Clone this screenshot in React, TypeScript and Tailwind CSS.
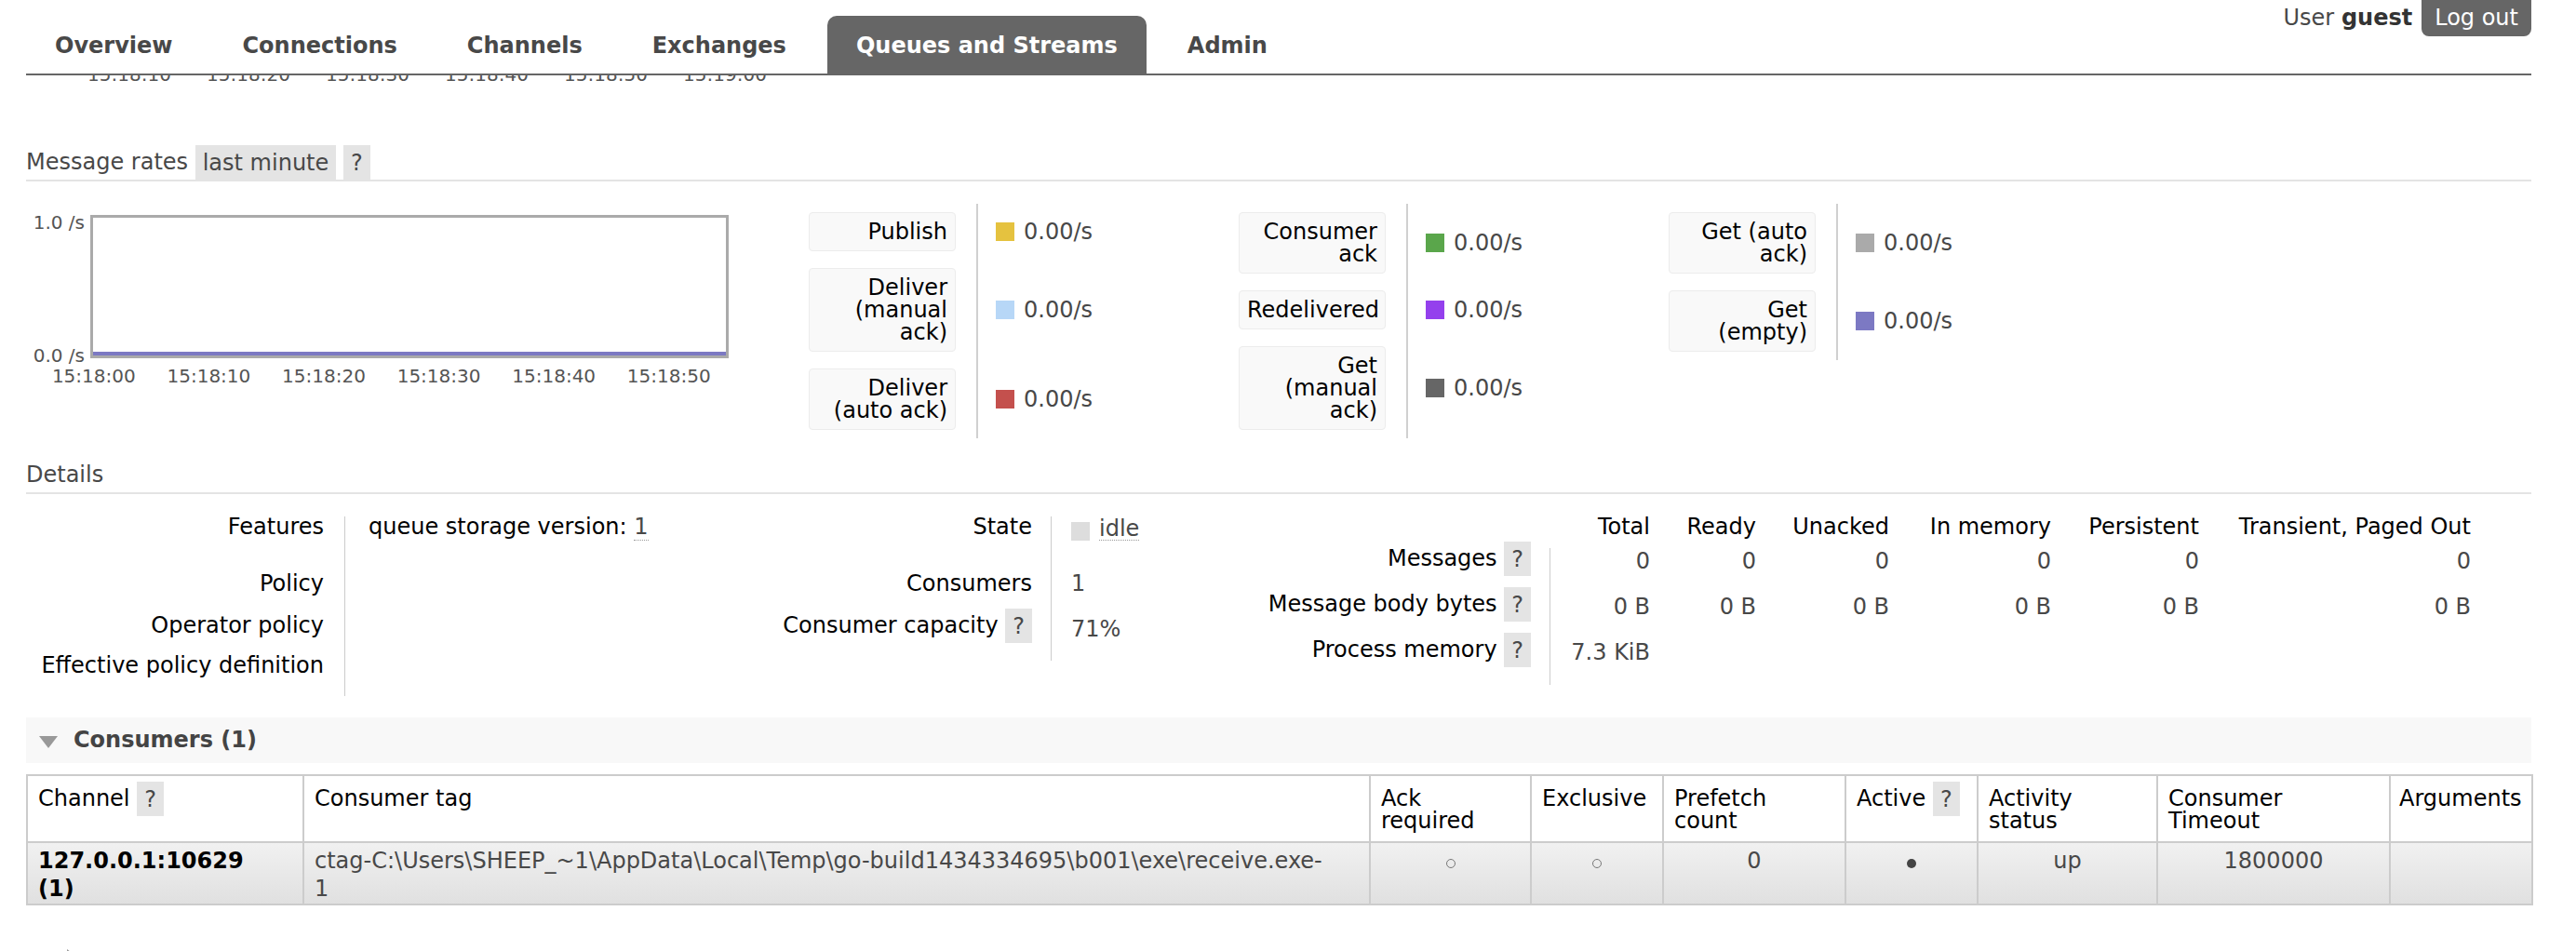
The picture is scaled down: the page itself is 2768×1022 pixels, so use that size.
import React from "react";

const tabs = ["Overview", "Connections", "Channels", "Exchanges", "Queues and Streams", "Admin"];

const peekLabels = ["15:18:10", "15:18:20", "15:18:30", "15:18:40", "15:18:50", "15:19:00"];
const timeLabels = ["15:18:00", "15:18:10", "15:18:20", "15:18:30", "15:18:40", "15:18:50"];

const legend = [
  [
    { label: "Publish", color: "#e5c23f" },
    { label: "Deliver (manual ack)", color: "#b7d7f7" },
    { label: "Deliver (auto ack)", color: "#c4504d" },
  ],
  [
    { label: "Consumer ack", color: "#5aa64b" },
    { label: "Redelivered", color: "#9440ed" },
    { label: "Get (manual ack)", color: "#666666" },
  ],
  [
    { label: "Get (auto ack)", color: "#aaaaaa" },
    { label: "Get (empty)", color: "#7c79c3" },
  ],
];

const statCols = [
  { name: "Total", w: "w-[108px]", msgs: "0", bytes: "0 B" },
  { name: "Ready", w: "w-[114px]", msgs: "0", bytes: "0 B" },
  { name: "Unacked", w: "w-[143px]", msgs: "0", bytes: "0 B" },
  { name: "In memory", w: "w-[174px]", msgs: "0", bytes: "0 B" },
  { name: "Persistent", w: "w-[159px]", msgs: "0", bytes: "0 B" },
  { name: "Transient, Paged Out", w: "w-[292px]", msgs: "0", bytes: "0 B" },
];

function Help() {
  return <span className="bg-[#e4e4e4] px-[8px] py-[4.5px] text-[#484848]">?</span>;
}

function Header() {
  return (
    <div className="flex items-start justify-between border-b-2 border-[#666]">
      <ul className="flex gap-[13px] pt-[17px]">
        {tabs.map((t) => (
          <li
            key={t}
            className={`h-[62px] px-[31px] pt-[18px] font-bold leading-[29px] ${
              t === "Queues and Streams" ? "rounded-t-[10px] bg-[#666] text-white" : "text-[#484848]"
            }`}
          >
            {t}
          </li>
        ))}
      </ul>
      <div className="flex items-start leading-[29px]">
        <span className="pt-[5px]">
          User <b className="text-[#333]">guest</b>
        </span>
        <span className="-mt-[8px] ml-[10px] h-[47px] rounded-[8px] bg-[#666] px-[14px] pt-[13px] text-white">
          Log out
        </span>
      </div>
    </div>
  );
}

function LegendColumn({ rows }: { rows: { label: string; color: string }[] }) {
  return (
    <div className="grid grid-cols-[180px_282px]">
      {rows.map((r) => (
        <React.Fragment key={r.label}>
          <div className="py-[9px]">
            <div className="w-[158px] rounded-[4px] border border-[#ececec] bg-[#f9f9f9] px-[8px] py-[8px] text-right leading-[24px] text-black">
              {r.label}
            </div>
          </div>
          <div className="flex items-center gap-[10px] border-l-2 border-[#d0d0d0] pl-[19px]">
            <span className="h-[20px] w-[20px]" style={{ backgroundColor: r.color }} />
            <span>0.00/s</span>
          </div>
        </React.Fragment>
      ))}
    </div>
  );
}

function Rates() {
  return (
    <>
      <div className="mt-[67px] border-b-2 border-[#e4e4e4] leading-[37px]">
        Message rates <span className="bg-[#e4e4e4] px-[8px] py-[4.5px]">last minute</span> <Help />
      </div>
      <div className="mt-[24px] flex items-start">
        <div className="mt-[8px] w-[755px] text-[20px] leading-[24px] text-[#545454]">
          <div className="flex">
            <div className="flex h-[167px] w-[63px] flex-col justify-between text-right">
              <span>1.0 /s</span>
              <span>0.0 /s</span>
            </div>
            <div className="ml-[6px] mt-[4px] flex h-[154px] w-[686px] flex-col justify-end border-[3px] border-[#aaa] bg-white">
              <div className="h-[4px] bg-[#7c79c3]" />
            </div>
          </div>
          <div className="-mt-[2px] flex pl-[11px]">
            {timeLabels.map((l) => (
              <span key={l} className="w-[123.6px] shrink-0 text-center">
                {l}
              </span>
            ))}
          </div>
        </div>
        <div className="ml-[86px] flex items-start">
          {legend.map((col, i) => (
            <LegendColumn key={i} rows={col} />
          ))}
        </div>
      </div>
    </>
  );
}

function Details() {
  return (
    <>
      <div className="mt-[21px] border-b-2 border-[#e4e4e4] leading-[37px]">Details</div>
      <div className="mt-[18px] flex items-start leading-[29px]">
        {/* general */}
        <div className="flex">
          <div className="w-[320px] text-right text-black">
            <div className="h-[61px] pt-[3px]">Features</div>
            <div className="h-[45px] pt-[3px]">Policy</div>
            <div className="h-[43px] pt-[3px]">Operator policy</div>
            <div className="h-[50px] pt-[3px]">Effective policy definition</div>
          </div>
          <div className="ml-[22px] mt-[6px] h-[193px] w-px bg-[#ccc]" />
          <div className="ml-[25px] w-[300px]">
            <div className="h-[61px] whitespace-nowrap pt-[3px] text-black">
              queue storage version:{" "}
              <span className="border-b border-dotted border-[#999] text-[#484848]">1</span>
            </div>
          </div>
        </div>

        {/* state */}
        <div className="flex">
          <div className="w-[413px] text-right text-black">
            <div className="h-[61px] pt-[3px]">State</div>
            <div className="h-[38px] pt-[3px]">Consumers</div>
            <div className="h-[49px] pt-[10px]">
              Consumer capacity <Help />
            </div>
          </div>
          <div className="ml-[20px] mt-[6px] h-[155px] w-px bg-[#ccc]" />
          <div className="ml-[21px] w-[200px]">
            <div className="flex h-[61px] items-start gap-[10px] pt-[7px]">
              <span className="mt-[5px] h-[20px] w-[20px] bg-[#ddd]" />
              <span className="border-b border-dotted border-[#999] leading-[24px]">idle</span>
            </div>
            <div className="h-[38px] pt-[3px]">1</div>
            <div className="h-[49px] pt-[14px]">71%</div>
          </div>
        </div>

        {/* message stats */}
        <div className="flex">
          <div className="w-[294px] text-right text-black">
            <div className="h-[33px]" />
            <div className="h-[49px] pt-[4px]">
              Messages <Help />
            </div>
            <div className="h-[49px] pt-[4px]">
              Message body bytes <Help />
            </div>
            <div className="h-[49px] pt-[4px]">
              Process memory <Help />
            </div>
          </div>
          <div className="ml-[20px] mt-[40px] h-[147px] w-px bg-[#ccc]" />
          <div className="ml-[20px]">
            <div className="flex h-[33px] pt-[3px] text-black">
              {statCols.map((c) => (
                <div key={c.name} className={`${c.w} whitespace-nowrap pr-[21px] text-right`}>
                  {c.name}
                </div>
              ))}
            </div>
            <div className="flex h-[49px] pt-[7px]">
              {statCols.map((c) => (
                <div key={c.name} className={`${c.w} pr-[21px] text-right`}>
                  {c.msgs}
                </div>
              ))}
            </div>
            <div className="flex h-[49px] pt-[7px]">
              {statCols.map((c) => (
                <div key={c.name} className={`${c.w} pr-[21px] text-right`}>
                  {c.bytes}
                </div>
              ))}
            </div>
            <div className="flex h-[49px] pt-[7px]">
              <div className="w-[108px] pr-[21px] text-right">7.3 KiB</div>
            </div>
          </div>
        </div>
      </div>
    </>
  );
}

function Circle({ filled }: { filled?: boolean }) {
  return (
    <span
      className={`inline-block h-[10px] w-[10px] rounded-full ${
        filled ? "bg-[#444]" : "border border-[#777]"
      }`}
    />
  );
}

function Consumers() {
  const th = "border-2 border-[#ccc] px-[11px] pt-[12px] pb-[10px] text-left align-top font-normal leading-[24px] text-black";
  const td = "border-2 border-[#ccc] px-[11px] pt-[4px] pb-[1px] align-top leading-[30px]";
  return (
    <>
      <div className="mt-[23px] flex h-[49px] items-center bg-[#f8f8f8] pl-[14px] font-bold text-[#444]">
        <svg width="20" height="13" viewBox="0 0 20 13" className="mt-[3px]">
          <polygon points="0,0 20,0 10,13" fill="#999" />
        </svg>
        <span className="ml-[17px] leading-[49px]">Consumers (1)</span>
      </div>
      <table className="mt-[12px] w-full table-fixed border-collapse border-2 border-[#ccc]">
        <colgroup>
          <col className="w-[297px]" />
          <col className="w-[1146px]" />
          <col className="w-[173px]" />
          <col className="w-[142px]" />
          <col className="w-[196px]" />
          <col className="w-[142px]" />
          <col className="w-[193px]" />
          <col className="w-[250px]" />
          <col className="w-[153px]" />
        </colgroup>
        <thead>
          <tr className="bg-white">
            <th className={th}>
              Channel <Help />
            </th>
            <th className={th}>Consumer tag</th>
            <th className={th}>
              Ack
              <br />
              required
            </th>
            <th className={th}>Exclusive</th>
            <th className={th}>
              Prefetch
              <br />
              count
            </th>
            <th className={th}>
              Active <Help />
            </th>
            <th className={th}>
              Activity
              <br />
              status
            </th>
            <th className={th}>
              Consumer
              <br />
              Timeout
            </th>
            <th className={`${th} whitespace-nowrap !px-[9px]`}>Arguments</th>
          </tr>
        </thead>
        <tbody>
          <tr className="bg-linear-to-b from-[#f1f1f1] to-[#e0e0e0]">
            <td className={`${td} font-bold text-black`}>
              127.0.0.1:10629
              <br />
              (1)
            </td>
            <td className={td}>
              <span className="whitespace-nowrap">
                ctag-C:\Users\SHEEP_~1\AppData\Local\Temp\go-build1434334695\b001\exe\receive.exe-
              </span>
              <br />1
            </td>
            <td className={`${td} text-center`}>
              <Circle />
            </td>
            <td className={`${td} text-center`}>
              <Circle />
            </td>
            <td className={`${td} text-center`}>0</td>
            <td className={`${td} text-center`}>
              <Circle filled />
            </td>
            <td className={`${td} text-center`}>up</td>
            <td className={`${td} text-center`}>1800000</td>
            <td className={td} />
          </tr>
        </tbody>
      </table>
      <div className="mt-[47px] flex items-start pl-[44px]">
        <svg width="13" height="20" viewBox="0 0 13 20">
          <polygon points="0,0 13,10 0,20" fill="#999" />
        </svg>
        <span className="ml-[22px] font-bold text-[#444]">Bindings</span>
      </div>
    </>
  );
}

export default function App() {
  return (
    <div className="h-[1022px] overflow-hidden bg-white pl-[28px] pr-[48px] font-['DejaVu_Sans',sans-serif] text-[24px] text-[#484848]">
      <Header />

      {/* tail of the chart above, scrolled under the tabs */}
      <div className="h-[8px] overflow-hidden text-[20px] leading-[24px] text-[#545454]">
        <div className="-mt-[13px] flex pl-[47px]">
          {peekLabels.map((l) => (
            <span key={l} className="w-[128px] shrink-0 text-center">
              {l}
            </span>
          ))}
        </div>
      </div>

      <Rates />
      <Details />
      <Consumers />
    </div>
  );
}
